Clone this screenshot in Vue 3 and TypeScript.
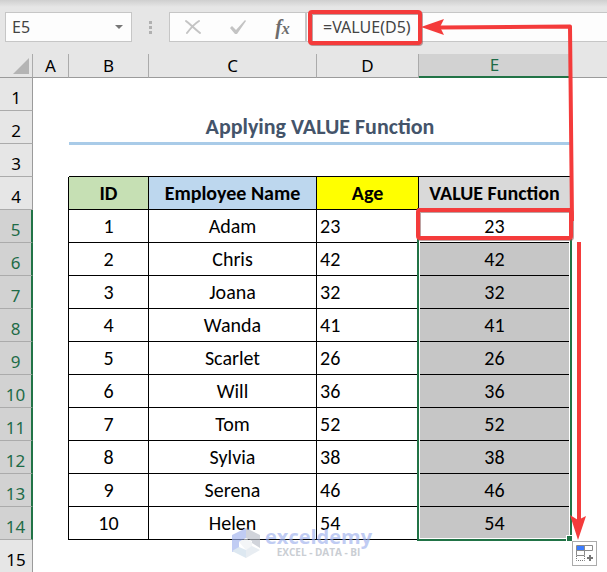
<script setup lang="ts">
import { ref } from 'vue'

interface Employee {
  id: number
  name: string
  age: string
}

const cellName = ref('E5')
const formula = ref('=VALUE(D5)')

const columns: string[] = ['A', 'B', 'C', 'D', 'E', '']
const firstDataRow = 5

const employees: Employee[] = [
  { id: 1, name: 'Adam', age: '23' },
  { id: 2, name: 'Chris', age: '42' },
  { id: 3, name: 'Joana', age: '32' },
  { id: 4, name: 'Wanda', age: '41' },
  { id: 5, name: 'Scarlet', age: '26' },
  { id: 6, name: 'Will', age: '36' },
  { id: 7, name: 'Tom', age: '52' },
  { id: 8, name: 'Sylvia', age: '38' },
  { id: 9, name: 'Serena', age: '46' },
  { id: 10, name: 'Helen', age: '54' },
]

const toValue = (text: string): number => Number(text)
</script>

<template>
  <main class="workbook">
    <header class="formula-bar">
      <div class="name-box">
        <input v-model="cellName" class="name-input" aria-label="Name box" />
        <button class="caret" type="button" aria-label="Open name list">
          <svg width="8" height="4" viewBox="0 0 8 4"><path d="M0 0h8L4 4z" fill="#777" /></svg>
        </button>
      </div>
      <div class="grip"><i></i><i></i><i></i></div>
      <div class="actions">
        <button type="button" aria-label="Cancel">
          <svg width="16" height="16" viewBox="0 0 16 16"><path d="M1 2C5 5 10 10 15 14M14 2C9 5 5 10 2 14" fill="none" stroke="#c4c4c4" stroke-width="2" stroke-linecap="round" /></svg>
        </button>
        <button type="button" aria-label="Enter">
          <svg width="18" height="16" viewBox="0 0 18 16"><path d="M1 9l2-2 4 4 9-10 1 1L8 15H6z" fill="#c4c4c4" /></svg>
        </button>
        <button class="fx" type="button" aria-label="Insert function"><span class="f">f</span><span class="x">x</span></button>
      </div>
      <input v-model="formula" class="formula-input" aria-label="Formula" />
    </header>

    <table class="sheet">
      <colgroup>
        <col class="w-head" /><col class="w-a" /><col class="w-b" /><col class="w-c" /><col class="w-d" /><col class="w-e" /><col />
      </colgroup>
      <thead>
        <tr>
          <th class="corner"><svg width="16" height="16" viewBox="0 0 16 16"><path d="M16 0v16H0z" fill="#b4b4b4" /></svg></th>
          <th v-for="column in columns" :key="column" scope="col" class="col-head" :class="{ active: column === 'E', last: !column }">{{ column }}</th>
        </tr>
      </thead>
      <tbody>
        <tr><th scope="row" class="row-head">1</th><td colspan="6"></td></tr>
        <tr><th scope="row" class="row-head">2</th><td></td><td colspan="4" class="title">Applying VALUE Function</td><td></td></tr>
        <tr><th scope="row" class="row-head">3</th><td></td><td colspan="4" class="spacer"></td><td></td></tr>
        <tr class="labels">
          <th scope="row" class="row-head">4</th>
          <td class="edge"></td>
          <th class="cell green">ID</th>
          <th class="cell blue">Employee Name</th>
          <th class="cell yellow">Age</th>
          <th class="cell gray">VALUE Function</th>
          <td></td>
        </tr>
        <tr v-for="(employee, index) in employees" :key="employee.id">
          <th scope="row" class="row-head active">{{ firstDataRow + index }}</th>
          <td class="edge"></td>
          <td class="cell">{{ employee.id }}</td>
          <td class="cell">{{ employee.name }}</td>
          <td class="cell text">{{ employee.age }}</td>
          <td class="cell" :class="{ selected: index > 0 }">{{ toValue(employee.age) }}</td>
          <td></td>
        </tr>
        <tr><th scope="row" class="row-head">15</th><td colspan="6"></td></tr>
      </tbody>
    </table>

    <div class="selection"></div>

    <div class="watermark">
      <svg width="28" height="30" viewBox="0 0 28 30">
        <path d="M0 7L14 0v10L7 14v8L0 24z" fill="#9fb2ee" />
        <path d="M14 0l14 7v13l-8-5v-2l-6-3z" fill="#b9bec8" />
        <path d="M7 14l7-4 6 4v5l-6 3z" fill="#edf0f4" />
        <path d="M0 23l7-4 7 3v8z" fill="#cbdcea" />
        <path d="M14 22l6-4 8 4-14 8z" fill="#dce4ec" />
      </svg>
      <div class="brand"><strong>exceldemy</strong><small>EXCEL - DATA - BI</small></div>
    </div>

    <svg class="annotations" width="607" height="572" viewBox="0 0 607 572" aria-hidden="true">
      <g fill="none" stroke="#8b5555" stroke-opacity=".55" stroke-width="4" stroke-linejoin="round">
        <rect x="311" y="13" width="110" height="31" rx="2" />
        <rect x="419" y="211" width="153" height="28" rx="2" />
      </g>
      <g fill="none" stroke="#f43b3b" stroke-width="4" stroke-linejoin="round">
        <rect x="310" y="12" width="110" height="31" rx="2" />
        <rect x="418" y="210" width="153" height="28" rx="2" />
        <path d="M440 27.500L570 26.500L572 221" />
        <path d="M579 242V520" />
      </g>
      <g fill="#f43b3b">
        <path d="M421 27l23-8-4 8 4 8z" />
        <path d="M578 540l-8-25 8 5 8-4z" />
      </g>
    </svg>

    <button class="fill-options" type="button" aria-label="Auto fill options">
      <svg width="17" height="17" viewBox="0 0 17 17">
        <g fill="#fff" stroke="#8a8a8a">
          <path d="M.5.5h8v5h-8zM8.500.5h8v5h-8zM.5 5.500h8v5h-8z" />
        </g>
        <path d="M1 1h7v4H1z" fill="#3b7cff" />
        <path d="M.5 11v4.500h8V11" fill="none" stroke="#777" stroke-dasharray="1 1" />
        <path d="M13 10h2v2h2v2h-2v2h-2v-2h-2v-2h2z" fill="#777" />
      </svg>
    </button>
  </main>
</template>

<style>
body {
  margin: 0;
  background: #fff;
}
</style>

<style scoped>
.workbook {
  position: relative;
  overflow: hidden;
  color: #000;
  font-family: Carlito, Lato, sans-serif;
}
button,
input {
  margin: 0;
  padding: 0;
  border: 0;
  background: none;
  font: inherit;
  color: inherit;
  border-radius: 0;
  min-width: 0;
}
button {
  display: flex;
  align-items: center;
  justify-content: center;
}
.formula-bar {
  box-sizing: border-box;
  height: 54px;
  padding: 12px 0 12px 5px;
  display: flex;
  background: linear-gradient(#cfcfcf, #e6e6e6 7px);
}
.name-box,
.actions,
.formula-input {
  box-sizing: border-box;
  border: 1px solid #c6c6c6;
  background: #fdfdfd;
}
.name-box {
  width: 127px;
  flex: none;
  display: flex;
  padding-left: 6px;
}
.name-input,
.formula-input {
  font-family: "Noto Sans", sans-serif;
  font-size: 16px;
  color: #444;
}
.name-input {
  flex: 1;
}
.caret {
  width: 24px;
}
.grip {
  width: 37px;
  flex: none;
  display: flex;
  flex-direction: column;
  align-items: center;
  justify-content: center;
  gap: 2px;
}
.grip i {
  width: 3px;
  height: 3px;
  background: #b0b0b0;
}
.actions {
  width: 137px;
  flex: none;
  display: flex;
}
.actions button {
  flex: 1;
}
.fx {
  font-family: "Liberation Serif", serif;
  font-style: italic;
  font-weight: bold;
  color: #6c6c6c;
}
.f {
  font-size: 20px;
  line-height: 24px;
}
.x {
  font-size: 16px;
  line-height: 16px;
  padding-top: 4px;
}
.formula-input {
  flex: 1;
  padding-left: 16px;
  border-right: 0;
}
.sheet {
  width: 100%;
  table-layout: fixed;
  border-collapse: separate;
  border-spacing: 0;
}
.w-head { width: 33px; }
.w-a { width: 36px; }
.w-b { width: 80px; }
.w-c { width: 168px; }
.w-d { width: 102px; }
.w-e { width: 152px; }
th,
td {
  box-sizing: border-box;
  height: 33px;
  padding: 0;
  text-align: center;
  font-size: 20px;
  line-height: 24px;
}
.corner,
.col-head {
  height: 24px;
  line-height: 22px;
  border-bottom: 1px solid #9b9b9b;
  border-right: 1px solid #ababab;
  background: #e6e6e6;
}
.col-head,
.row-head {
  font-family: "Noto Sans", sans-serif;
  font-size: 17px;
  font-weight: normal;
}
.corner svg {
  display: block;
  margin-left: 13px;
}
.col-head.active {
  border-bottom: 2px solid #217346;
  background: #d2d2d2;
  color: #1e6b47;
}
.col-head.last {
  border-right: 0;
}
.row-head {
  padding-top: 8px;
  border-bottom: 1px solid #ababab;
  border-right: 1px solid #9b9b9b;
  background: #e6e6e6;
}
.row-head.active {
  border-right: 2px solid #217346;
  background: #d2d2d2;
  color: #1e6b47;
}
.title {
  border-bottom: 2px solid #a9cbe8;
  box-shadow: 0 1px #a9cbe8;
  font-size: 22px;
  font-weight: bold;
  color: #44546a;
}
.spacer {
  border-bottom: 1px solid #000;
}
.edge {
  border-right: 1px solid #000;
}
.cell {
  border-right: 1px solid #000;
  border-bottom: 1px solid #000;
}
.green { background: #c6e0b4; }
.blue { background: #bdd7ee; }
.yellow { background: #ff0; }
.gray { background: #d9d9d9; }
.text {
  padding-left: 3px;
  text-align: left;
}
.selected {
  background: #c6c6c6;
}
.selection {
  position: absolute;
  left: 417px;
  top: 208px;
  box-sizing: border-box;
  width: 155px;
  height: 333px;
  border: 2px solid #217346;
  box-shadow: inset 0 0 0 1px #fff;
}
.selection::after {
  content: "";
  position: absolute;
  right: -3px;
  bottom: -3px;
  width: 5px;
  height: 5px;
  border: 1px solid #fff;
  background: #217346;
}
.annotations {
  position: absolute;
  left: 0;
  top: 0;
  pointer-events: none;
}
.watermark {
  position: absolute;
  left: 232px;
  top: 528px;
  display: flex;
  gap: 5px;
  opacity: 0.65;
}
.brand {
  display: flex;
  flex-direction: column;
  align-items: center;
  font-family: "Open Sans", sans-serif;
  color: #9fb2ee;
}
.brand strong {
  font-size: 20px;
  line-height: 18px;
}
.brand small {
  font-size: 10px;
  line-height: 12px;
  font-weight: bold;
  color: #aeb4bd;
}
.fill-options {
  position: absolute;
  left: 572px;
  top: 541px;
  width: 25px;
  height: 25px;
  border: 1px solid #ababab;
  background: #fff;
}
</style>
